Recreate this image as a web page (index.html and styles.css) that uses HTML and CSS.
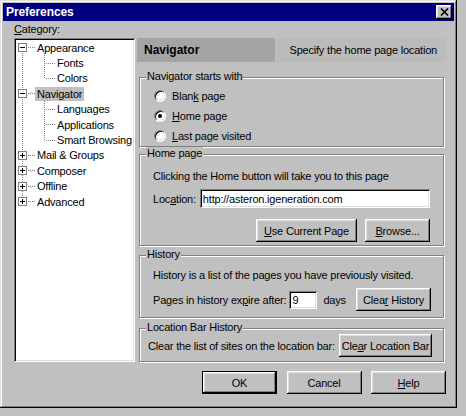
FILE: index.html
```html
<!DOCTYPE html>
<html>
<head>
<meta charset="utf-8">
<title>Preferences</title>
<link rel="stylesheet" href="styles.css">
</head>
<body>
<div class="window">
  <div class="titlebar">
    <span class="title">Preferences</span>
    <span class="close"><svg width="9" height="8" viewBox="0 0 9 8"><path d="M1 0.5 L8 7.5 M8 0.5 L1 7.5" stroke="#000" stroke-width="1.6" fill="none"/></svg></span>
  </div>
  <div class="content">
    <div class="cat-label"><u>C</u>ategory:</div>
    <div class="main">
      <div class="tree">
        <svg class="tree-lines" width="117" height="320" viewBox="0 0 117 320" shape-rendering="crispEdges">
          <g stroke="#808080" stroke-width="1" stroke-dasharray="1 1" fill="none">
            <line x1="6.5" y1="7" x2="6.5" y2="162"/>
            <line x1="12" y1="7.5" x2="19" y2="7.5"/>
            <line x1="12" y1="53.5" x2="19" y2="53.5"/>
            <line x1="12" y1="115.5" x2="19" y2="115.5"/>
            <line x1="12" y1="130.5" x2="19" y2="130.5"/>
            <line x1="12" y1="146.5" x2="19" y2="146.5"/>
            <line x1="12" y1="161.5" x2="19" y2="161.5"/>
            <line x1="28.5" y1="13" x2="28.5" y2="39"/>
            <line x1="30" y1="23.5" x2="39" y2="23.5"/>
            <line x1="30" y1="38.5" x2="39" y2="38.5"/>
            <line x1="28.5" y1="59" x2="28.5" y2="101"/>
            <line x1="30" y1="69.5" x2="39" y2="69.5"/>
            <line x1="30" y1="84.5" x2="39" y2="84.5"/>
            <line x1="30" y1="100.5" x2="39" y2="100.5"/>
          </g>
          <g stroke="#808080" fill="#fff">
            <rect x="2.5" y="3.5" width="8" height="8"/>
            <rect x="2.5" y="49.5" width="8" height="8"/>
            <rect x="2.5" y="111.5" width="8" height="8"/>
            <rect x="2.5" y="126.5" width="8" height="8"/>
            <rect x="2.5" y="142.5" width="8" height="8"/>
            <rect x="2.5" y="157.5" width="8" height="8"/>
          </g>
          <g stroke="#000" fill="none">
            <line x1="4" y1="7.5" x2="9" y2="7.5"/>
            <line x1="4" y1="53.5" x2="9" y2="53.5"/>
            <line x1="4" y1="115.5" x2="9" y2="115.5"/>
            <line x1="6.5" y1="113" x2="6.5" y2="118"/>
            <line x1="4" y1="130.5" x2="9" y2="130.5"/>
            <line x1="6.5" y1="128" x2="6.5" y2="133"/>
            <line x1="4" y1="146.5" x2="9" y2="146.5"/>
            <line x1="6.5" y1="144" x2="6.5" y2="149"/>
            <line x1="4" y1="161.5" x2="9" y2="161.5"/>
            <line x1="6.5" y1="159" x2="6.5" y2="164"/>
          </g>
        </svg>
        <div class="rows">
          <div class="row l0"><span class="lbl">Appearance</span></div>
          <div class="row l1"><span class="lbl">Fonts</span></div>
          <div class="row l1"><span class="lbl">Colors</span></div>
          <div class="row l0"><span class="lbl sel">Navigator</span></div>
          <div class="row l1"><span class="lbl">Languages</span></div>
          <div class="row l1"><span class="lbl">Applications</span></div>
          <div class="row l1"><span class="lbl">Smart Browsing</span></div>
          <div class="row l0"><span class="lbl">Mail &amp; Groups</span></div>
          <div class="row l0"><span class="lbl">Composer</span></div>
          <div class="row l0"><span class="lbl">Offline</span></div>
          <div class="row l0"><span class="lbl">Advanced</span></div>
        </div>
      </div>
      <div class="panel">
        <div class="header">
          <span class="h-title">Navigator</span>
          <span class="h-desc">Specify the home page location</span>
        </div>
        <div class="group g1">
          <span class="legend">Navigator starts with</span>
          <div class="radio-row"><span class="radio"></span><span>Blan<u>k</u> page</span></div>
          <div class="radio-row"><span class="radio checked"></span><span><u>H</u>ome page</span></div>
          <div class="radio-row"><span class="radio"></span><span><u>L</u>ast page visited</span></div>
        </div>
        <div class="group g2">
          <span class="legend">Home page</span>
          <div class="line">Clicking the Home button will take you to this page</div>
          <div class="loc-row">
            <span>Loc<u>a</u>tion:</span>
            <input class="field loc-field" type="text" value="http://asteron.igeneration.com" readonly>
          </div>
          <div class="btn-row">
            <button class="btn w-use"><u>U</u>se Current Page</button>
            <button class="btn w-browse"><u>B</u>rowse...</button>
          </div>
        </div>
        <div class="group g3">
          <span class="legend">History</span>
          <div class="line">History is a list of the pages you have previously visited.</div>
          <div class="hist-row">
            <span>Pages in history ex<u>p</u>ire after:</span>
            <input class="field days-field" type="text" value="9" readonly>
            <span class="days">days</span>
            <button class="btn w-clear">Clea<u>r</u> History</button>
          </div>
        </div>
        <div class="group g4">
          <span class="legend">Location Bar History</span>
          <div class="locbar-row">
            <span>Clear the list of sites on the location bar:</span>
            <button class="btn w-clearloc">Cle<u>a</u>r Location Bar</button>
          </div>
        </div>
      </div>
    </div>
    <div class="footer">
      <button class="btn w-foot default">OK</button>
      <button class="btn w-foot">Cancel</button>
      <button class="btn w-foot"><u>H</u>elp</button>
    </div>
  </div>
</div>
</body>
</html>
```

FILE: styles.css
```css
* { box-sizing: border-box; }

body {
  margin: 0;
  background: #c0c0c0;
  font-family: "Liberation Sans", Arial, sans-serif;
  font-size: 11px;
  letter-spacing: -0.2px;
  color: #000;
}

.window {
  width: 457px;
  height: 408px;
  padding: 3px;
  background: #c0c0c0;
  box-shadow: inset -1px -1px 0 #000, inset 1px 1px 0 #dfdfdf,
              inset -2px -2px 0 #808080, inset 2px 2px 0 #fff;
  display: flex;
  flex-direction: column;
}

.titlebar {
  height: 18px;
  background: #000080;
  display: flex;
  align-items: center;
  justify-content: space-between;
  padding: 0 2px 0 3px;
}

.title {
  color: #fff;
  font-weight: bold;
  font-size: 12px;
  letter-spacing: -0.1px;
}

.close {
  width: 16px;
  height: 14px;
  background: #c0c0c0;
  display: flex;
  align-items: center;
  justify-content: center;
  box-shadow: inset -1px -1px 0 #000, inset 1px 1px 0 #fff,
              inset -2px -2px 0 #808080, inset 2px 2px 0 #dfdfdf;
}

.content {
  flex: 1;
  display: flex;
  flex-direction: column;
  padding: 2px 0 0 11px;
}

.cat-label {
  height: 13px;
  line-height: 13px;
  margin-bottom: 2px;
}

.main {
  display: flex;
  gap: 2px;
  height: 324px;
}

.tree {
  position: relative;
  width: 121px;
  height: 324px;
  padding: 2px;
  background: #fff;
  box-shadow: inset 1px 1px 0 #808080, inset -1px -1px 0 #fff,
              inset 2px 2px 0 #000, inset -2px -2px 0 #dfdfdf;
}

.tree-lines {
  position: absolute;
  top: 2px;
  left: 2px;
}

.rows {
  position: relative;
}

.row {
  height: 15.4px;
  display: flex;
  align-items: center;
}

.row.l0 { padding-left: 19px; }
.row.l1 { padding-left: 39px; }

.lbl {
  padding: 0 2px;
  height: 14px;
  line-height: 14px;
  white-space: nowrap;
}

.lbl.sel { background: #c0c0c0; }

.panel {
  width: 308px;
  display: flex;
  flex-direction: column;
}

.header {
  height: 24px;
  display: flex;
  align-items: center;
  justify-content: space-between;
  padding: 0 8px 0 7px;
  background: linear-gradient(to right, #a4a4a4 0, #a4a4a4 138px, #bbbbbb 138px);
}

.h-title {
  font-weight: bold;
  font-size: 12px;
  letter-spacing: 0;
}

.group {
  position: relative;
  margin-left: 2px;
  width: 305px;
  border: 1px solid #808080;
  box-shadow: inset 1px 1px 0 #fff, 1px 1px 0 #fff;
}

.legend {
  position: absolute;
  top: -8px;
  left: 6px;
  padding: 0 1px;
  line-height: 13px;
  background: #c0c0c0;
  white-space: nowrap;
}

.g1 { margin-top: 15px; height: 70px; padding: 8px 0 0 14px; }
.g2 { margin-top: 7px; height: 92px; padding: 15px 13px 0 13px; }
.g3 { margin-top: 9px; height: 63px; padding: 13px 12px 0 13px; }
.g4 { margin-top: 10px; height: 34px; padding: 5px 11px 0 8px; }

.radio-row {
  height: 20px;
  display: flex;
  align-items: center;
  gap: 6px;
}

.radio {
  position: relative;
  width: 12px;
  height: 12px;
  border-radius: 50%;
  border: 1px solid;
  border-color: #808080 #fff #fff #808080;
  background: #fff;
  box-shadow: inset 1px 1px 0 #000, inset -1px -1px 0 #dfdfdf;
  flex: none;
}

.radio.checked::after {
  content: "";
  position: absolute;
  left: 3px;
  top: 3px;
  width: 4px;
  height: 4px;
  border-radius: 50%;
  background: #000;
}

.line {
  height: 13px;
  line-height: 13px;
  white-space: nowrap;
}

.loc-row {
  display: flex;
  align-items: center;
  gap: 4px;
  margin-top: 6px;
  height: 19px;
}

.field {
  height: 19px;
  border: 0;
  margin: 0;
  padding: 0 0 0 3px;
  background: #fff;
  font: inherit;
  letter-spacing: inherit;
  color: #000;
  outline: none;
  box-shadow: inset 1px 1px 0 #808080, inset -1px -1px 0 #fff,
              inset 2px 2px 0 #000, inset -2px -2px 0 #dfdfdf;
}

.loc-field { flex: 1; min-width: 0; }

.btn-row {
  display: flex;
  justify-content: flex-end;
  gap: 8px;
  margin-top: 11px;
}

.btn {
  height: 23px;
  margin: 0;
  padding: 0;
  border: 0;
  background: #c0c0c0;
  font: inherit;
  letter-spacing: inherit;
  color: #000;
  text-align: center;
  white-space: nowrap;
  box-shadow: inset -1px -1px 0 #000, inset 1px 1px 0 #fff,
              inset -2px -2px 0 #808080, inset 2px 2px 0 #dfdfdf;
}

.btn.default { border: 1px solid #000; }

.w-use { width: 101px; }
.w-browse { width: 65px; }
.w-clear { width: 75px; margin-left: auto; }
.w-clearloc { width: 93px; }
.w-foot { width: 75px; }

.hist-row {
  display: flex;
  align-items: center;
  margin-top: 6px;
  height: 23px;
}

.days-field {
  width: 28px;
  height: 18px;
  margin-left: 3px;
}

.days { margin-left: 6px; }

.locbar-row {
  display: flex;
  align-items: center;
  justify-content: space-between;
  height: 23px;
}

.footer {
  display: flex;
  justify-content: flex-end;
  gap: 9.5px;
  margin-top: 9px;
  padding-right: 8px;
}
```
